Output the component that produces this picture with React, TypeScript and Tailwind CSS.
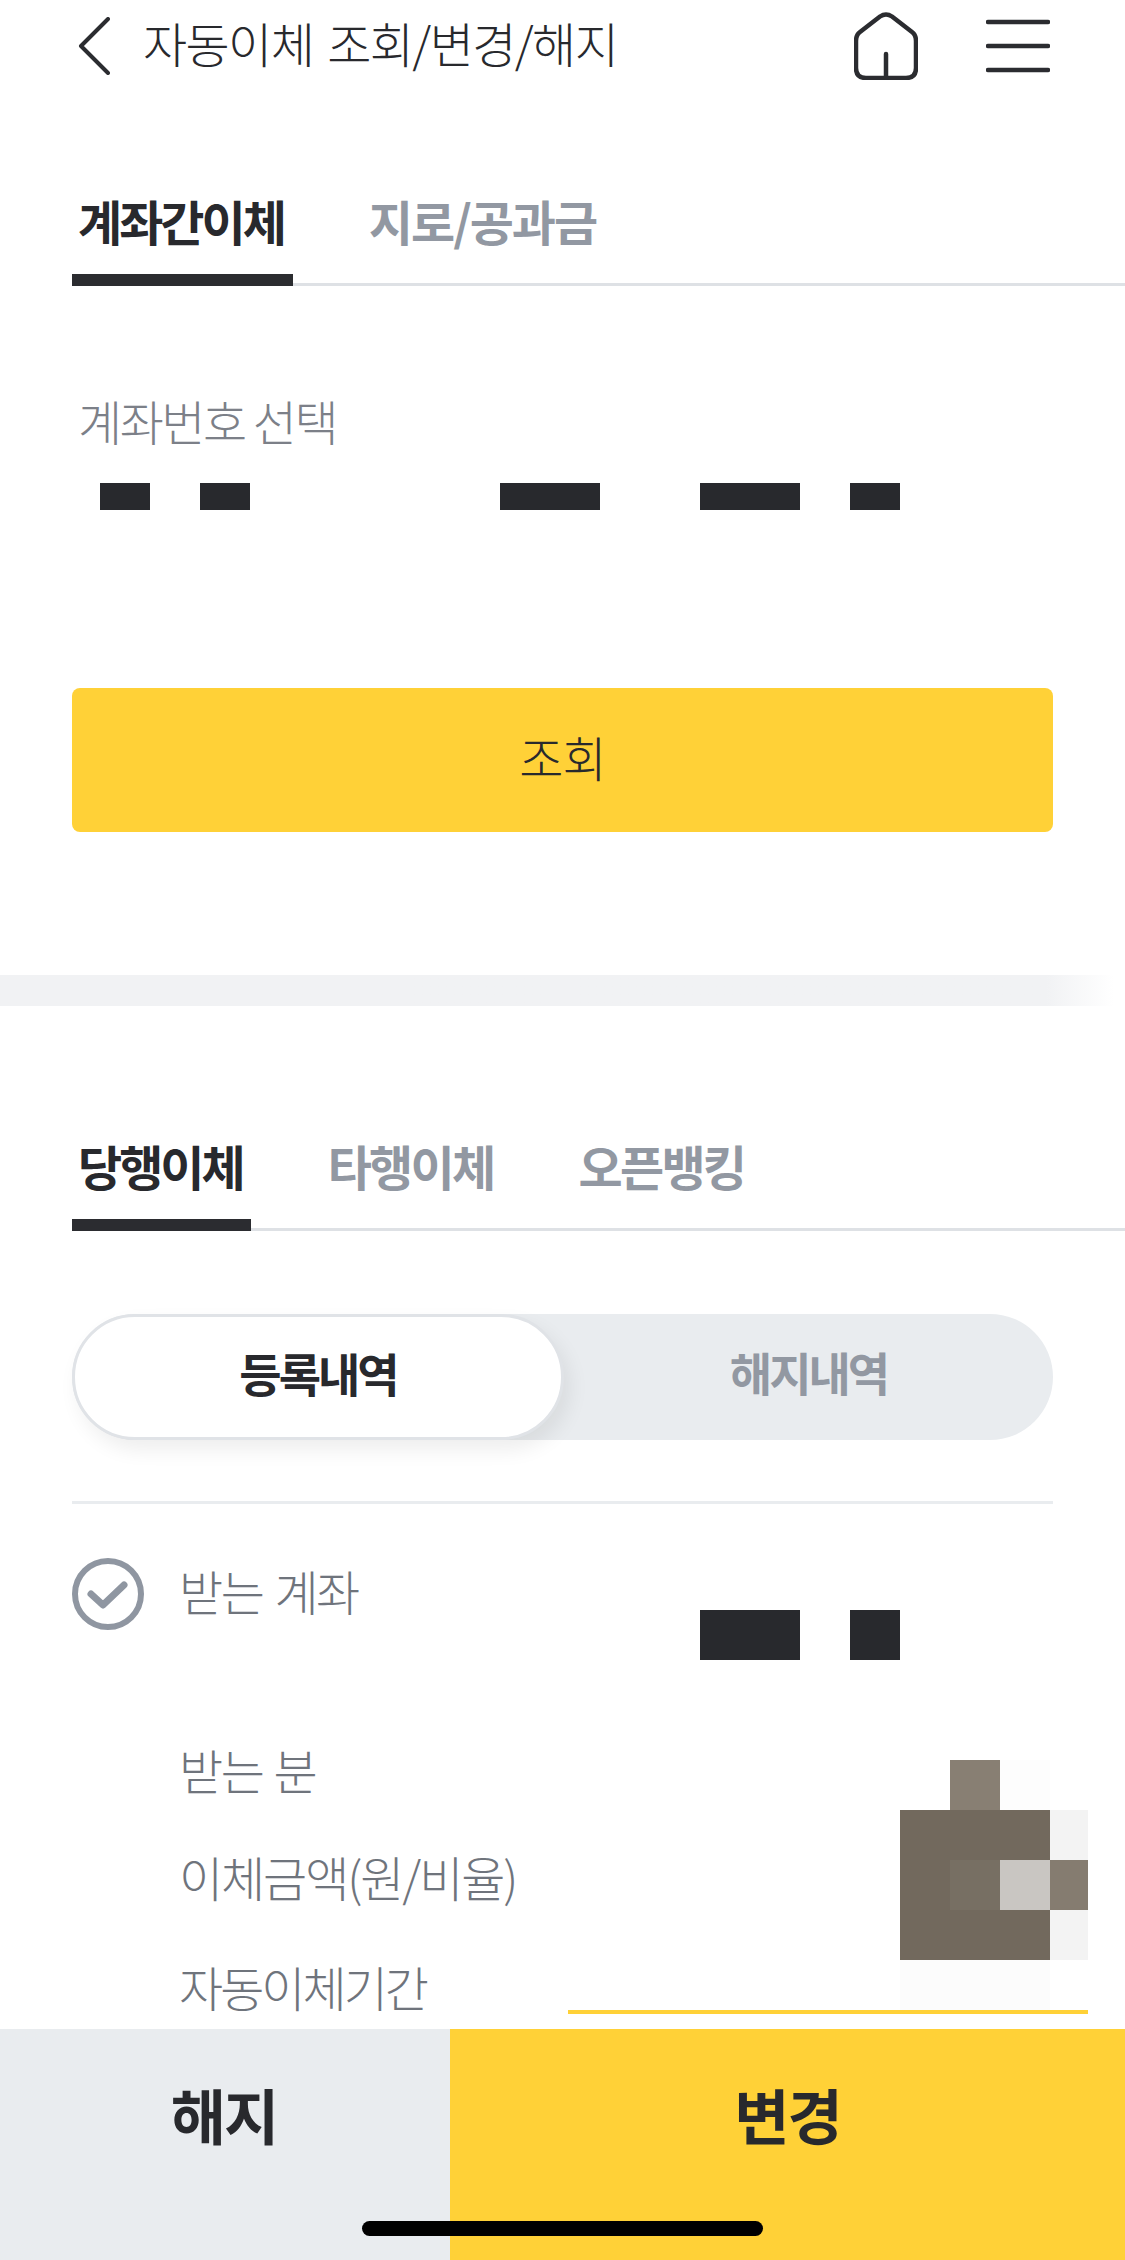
const FONT = "font-['Noto_Sans_CJK_KR','Noto_Sans',sans-serif]";

function Redacted({ spans, height }: { spans: [number, number][]; height: string }) {
  // spans are [gap before, width] in px, starting at the left edge of the row
  return (
    <div className={`flex ${height}`}>
      {spans.map(([gap, width], i) => (
        <div key={i} className="bg-[#28292d] h-full shrink-0" style={{ marginLeft: gap, width }} />
      ))}
    </div>
  );
}

function Tabs({ items, activeWidth, inactive, className }: { items: [string, number][]; activeWidth: string; inactive: string; className: string }) {
  return (
    <div className={`relative border-b-[3px] border-[#dee1e5] ml-[72px] ${className}`}>
      <div className="flex">
        {items.map(([label, gap], i) => (
          <span
            key={label}
            style={{ marginLeft: gap }}
            className={`font-bold whitespace-nowrap ${i === 0 ? "text-[#28292d] tracking-[-3px]" : `text-[#9298a2] ${inactive}`}`}
          >
            {label}
          </span>
        ))}
      </div>
      <div className={`absolute left-0 -bottom-[3px] bg-[#2b2c30] ${activeWidth}`} />
    </div>
  );
}

function DetailRow({ label, className }: { label: string; className: string }) {
  return <p className={`ml-[179px] text-[48px] leading-[60px] font-light text-[#6f747c] [word-spacing:3px] ${className}`}>{label}</p>;
}

export default function App() {
  return (
    <div className={`relative w-[1125px] h-[2260px] overflow-hidden bg-white ${FONT}`}>
      <header className="flex items-center h-[92px] pl-[78px] pr-[75px]">
        <svg width="32" height="58" viewBox="0 0 32 58" fill="none" stroke="#2b2c30" strokeWidth="4" strokeLinecap="round" strokeLinejoin="round">
          <path d="M30 2 L3 29 L30 56" />
        </svg>
        <h1 className="ml-[33px] mb-[8px] text-[48px] leading-[60px] tracking-[-1.6px] [word-spacing:5px] font-light text-[#28292d] whitespace-nowrap">자동이체 조회/변경/해지</h1>
        <svg className="ml-auto" width="64" height="68" viewBox="0 0 64 68" fill="none" stroke="#2b2c30" strokeWidth="4.5" strokeLinecap="round" strokeLinejoin="round">
          <path d="M26 4.5 Q32 0.5 38 4.5 L58 20 Q62 23 62 29 V56 Q62 66 52 66 H12 Q2 66 2 56 V29 Q2 23 6 20 Z" />
          <path d="M32 42 V66" />
        </svg>
        <svg className="ml-[68px]" width="64" height="54" viewBox="0 0 64 54" fill="none" stroke="#2b2c30" strokeWidth="4.5" strokeLinecap="round">
          <path d="M2 3 H62 M2 27 H62 M2 51 H62" />
        </svg>
      </header>

      <Tabs
        className="h-[194px] pt-[93px] text-[48px] leading-[70px]"
        activeWidth="w-[221px] h-[12px]"
        inactive="tracking-[-2px]"
        items={[["계좌간이체", 6], ["지로/공과금", 85]]}
      />

      <section className="pt-[104px] pb-[143px] px-[72px] ">
        <p className="ml-[6px] text-[48px] leading-[60px] tracking-[-2.5px] font-light text-[#7c8088]">계좌번호 선택</p>
        <Redacted height="h-[27px] mt-[33px]" spans={[[28, 50], [50, 50], [250, 100], [100, 100], [50, 50]]} />
        <button className="mt-[178px] pb-[9px] w-full h-[144px] rounded-[8px] bg-[#ffd137] text-[48px] tracking-[-1px] font-light text-[#28292d]">조회</button>
      </section>

      <div className="h-[31px] w-full bg-linear-to-r from-[#f1f2f4] from-[93%] to-white to-[99%]" />

      <Tabs
        className="mt-[120px] h-[105px] pt-[7px] text-[48px] leading-[64px]"
        activeWidth="w-[179px] h-[12px]"
        inactive="tracking-[-2.7px]"
        items={[["당행이체", 6], ["타행이체", 85], ["오픈뱅킹", 85]]}
      />

      <div className="mx-[72px] mt-[83px] h-[126px] rounded-full bg-[#e9ecef] flex">
        <div className="w-[492px] h-full pb-[10px] rounded-full bg-white border-[3px] border-[#e0e3e7] shadow-[6px_10px_20px_rgba(0,0,0,0.07)] flex items-center justify-center text-[46px] font-bold tracking-[-3px] text-[#28292d]">등록내역</div>
        <div className="flex-1 pb-[12px] flex items-center justify-center text-[46px] font-bold tracking-[-3px] text-[#9298a2]">해지내역</div>
      </div>

      <div className="mx-[72px] mt-[61px] h-[3px] bg-[#e9ecef]" />

      <div className="relative">
        <div className="flex items-start ml-[72px] pt-[54px]">
          <svg width="72" height="72" viewBox="0 0 72 72" fill="none" stroke="#8f96a1" strokeLinecap="round" strokeLinejoin="round">
            <circle cx="36" cy="36" r="33" strokeWidth="6" />
            <path d="M19 36 L31 47 L52 27" strokeWidth="7" />
          </svg>
          <p className="ml-[35px] mt-[2px] text-[48px] leading-[60px] tracking-[-2.5px] [word-spacing:4px] font-light text-[#6f747c]">받는 계좌</p>
        </div>
        <div className="absolute left-0 top-[106px]">
          <Redacted height="h-[50px]" spans={[[700, 100], [50, 50]]} />
        </div>
        <DetailRow label="받는 분" className="mt-[109px] tracking-[-2.5px]" />
        <DetailRow label="이체금액(원/비율)" className="mt-[47px] tracking-[-2.1px]" />
        <DetailRow label="자동이체기간" className="mt-[50px] tracking-[-3px]" />

        {/* mosaic over the amount column */}
        <div className="absolute left-[900px] top-[256px] w-[188px] grid grid-cols-[50px_50px_50px_38px] grid-rows-[50px_50px_50px_50px_50px]">
          <div />
          <div className="bg-[#887f73]" />
          <div className="bg-[#fdfdfd]" />
          <div />
          <div className="col-span-3 bg-[#72695d]" />
          <div className="bg-[#f3f3f3]" />
          <div className="bg-[#72695d]" />
          <div className="bg-[#776f63]" />
          <div className="bg-[#c9c6c2]" />
          <div className="bg-[#857c70]" />
          <div className="col-span-3 bg-[#72695d]" />
          <div className="bg-[#f3f3f3]" />
          <div className="col-span-3 bg-[#fcfcfc]" />
        </div>
        <div className="absolute left-[568px] top-[506px] w-[520px] h-[4px] bg-[#ffd137]" />
      </div>

      <div className="absolute left-0 right-0 bottom-0 h-[231px] flex">
        <div className="w-[450px] pr-[2px] bg-[#e9ecef] text-center pt-[45px] text-[60px] leading-[80px] font-bold tracking-[-2px] text-[#28292d]">해지</div>
        <div className="flex-1 bg-[#ffd137] text-center pt-[45px] text-[60px] leading-[80px] font-bold tracking-[-2px] text-[#28292d]">변경</div>
      </div>
      <div className="absolute left-[362px] bottom-[24px] w-[401px] h-[15px] rounded-full bg-black" />
    </div>
  );
}
